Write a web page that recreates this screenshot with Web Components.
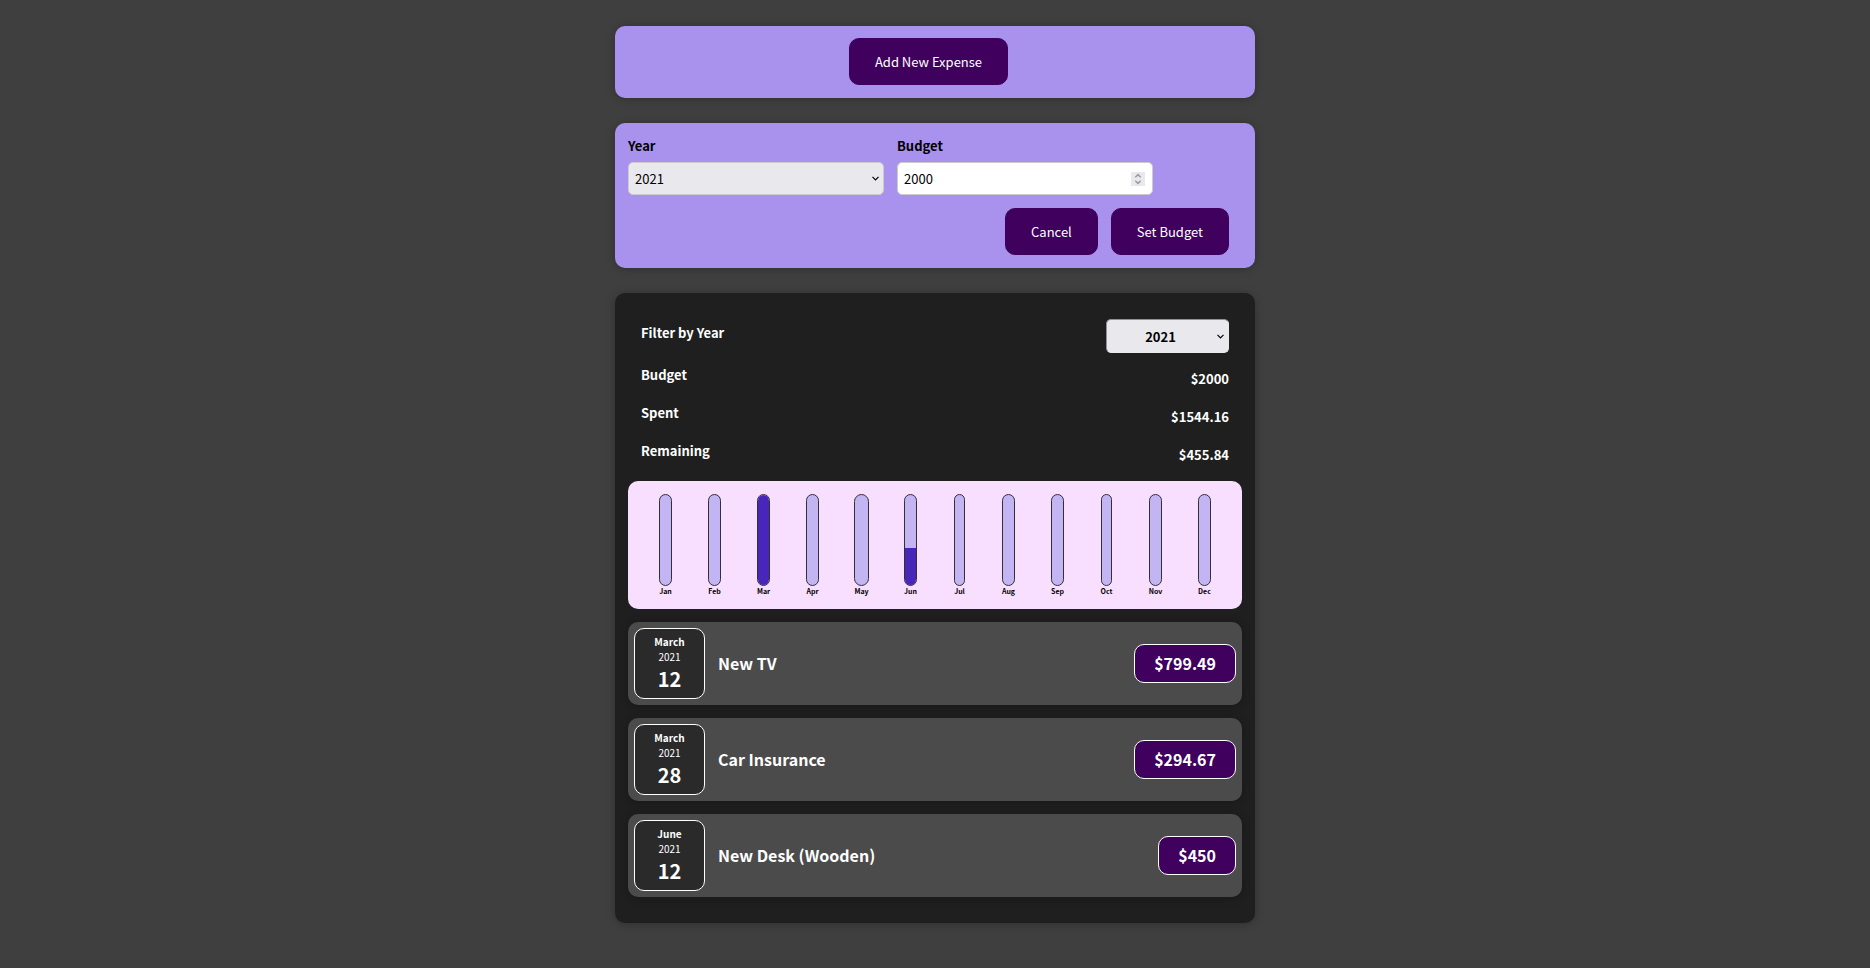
<!DOCTYPE html>
<html lang="en">
<head>
<meta charset="utf-8">
<meta name="viewport" content="width=device-width, initial-scale=1">
<title>Expense Tracker</title>
<style>
  body {
    margin: 0;
    padding: 26px 0;
    background: #3f3f3f;
    color: #fff;
    font: 13px/19px "Noto Sans CJK JP", "Noto Sans", sans-serif;
  }
</style>
</head>
<body>
<expense-app></expense-app>
<script>
const define = (name, html, setup) => {
  const template = document.createElement('template');
  template.innerHTML = html;
  customElements.define(name, class extends HTMLElement {
    connectedCallback() {
      if (this.shadowRoot) return;
      const root = this.attachShadow({ mode: 'open' });
      root.append(template.content.cloneNode(true));
      if (setup) setup(this, root);
    }
  });
};

define('ui-card', `
  <style>
    :host { display: block; border-radius: 10px; box-shadow: 0 1px 8px rgba(0,0,0,.25); background: var(--card-bg, #1f1f1f); }
  </style>
  <slot></slot>`);

define('ui-button', `
  <style>
    :host { display: block; }
    button { display: block; margin: 0; padding: 13px 25px; border: 1px solid #40005d; border-radius: 10px;
      background: #40005d; color: #fff; font: inherit; line-height: 19px; cursor: pointer; }
    button:hover { background: #510674; }
  </style>
  <button type="button"><slot></slot></button>`);

define('year-select', `
  <style>
    :host { display: grid; align-items: center; }
    select, svg { grid-area: 1 / 1; }
    select { appearance: none; box-sizing: border-box; width: 100%; height: 33px; margin: 0; padding: 0 6px;
      border: 1px solid #ccc; border-radius: 5px; background: #e9e9ed; color: #000; font: inherit; }
    svg { justify-self: end; margin-right: 5px; pointer-events: none; }
    :host([strong]) select { height: 34px; padding-right: 20px; border-color: #8f8f9d #e9e9ed #e9e9ed #8f8f9d;
      font-weight: bold; text-align: center; text-align-last: center; }
  </style>
  <select><option>2022</option><option selected>2021</option><option>2020</option><option>2019</option></select>
  <svg width="7" height="5" viewBox="0 0 7 5" fill="none" stroke="#000" stroke-width="1.2"><path d="M.5 .8 3.5 3.8 6.5 .8"/></svg>`,
  (host, root) => root.querySelector('select').setAttribute('aria-label', host.getAttribute('label')));

define('number-field', `
  <style>
    :host { display: grid; align-items: center; }
    input, svg { grid-area: 1 / 1; }
    input { appearance: textfield; box-sizing: border-box; width: 100%; height: 33px; margin: 0; padding: 0 28px 0 6px;
      border: 1px solid #ccc; border-radius: 5px; background: #fff; color: #000; font: inherit; }
    input::-webkit-inner-spin-button { appearance: none; margin: 0; }
    svg { justify-self: end; margin-right: 8px; pointer-events: none; }
  </style>
  <input type="number" value="2000" min="0">
  <svg width="14" height="14" viewBox="0 0 14 14" fill="none" stroke="#9a9aa2" stroke-width="1.5"><path fill="#e9e9ed" stroke="none" d="M0 0h14v14H0z"/><path d="M4.300 5.200 7 2.600 9.700 5.200M4.300 8.800 7 11.400 9.700 8.800"/></svg>`,
  (host, root) => root.querySelector('input').setAttribute('aria-label', host.getAttribute('label')));

define('form-field', `
  <style>
    :host { display: block; flex: 0 1 256px; min-width: 0; color: #000; }
    label { display: block; font-weight: bold; margin-bottom: 7px; }
  </style>
  <label><slot name="label"></slot></label><slot></slot>`);

define('budget-form', `
  <style>
    :host { display: block; padding: 13px; }
    .fields { display: flex; gap: 13px; }
    .actions { display: flex; justify-content: flex-end; gap: 13px; margin: 13px 13px 0 0; }
  </style>
  <form>
    <div class="fields">
      <form-field><span slot="label">Year</span><year-select label="Year"></year-select></form-field>
      <form-field><span slot="label">Budget</span><number-field label="Budget"></number-field></form-field>
    </div>
    <div class="actions"><ui-button>Cancel</ui-button><ui-button>Set Budget</ui-button></div>
  </form>`);

define('summary-row', `
  <style>
    :host { display: flex; justify-content: space-between; align-items: flex-start; height: 26px; margin-bottom: 12px; font-weight: bold; }
    .value { padding-top: 4px; }
  </style>
  <span><slot name="label"></slot></span><span class="value"><slot></slot></span>`);

define('chart-bar', `
  <style>
    :host { display: flex; flex-direction: column; align-items: stretch; color: #000; text-align: center; }
    .track { display: flex; flex-direction: column; justify-content: flex-end; height: 90px; overflow: hidden;
      border: 1px solid #313131; border-radius: 12px; background: #c3b4f3; }
    .fill { height: var(--fill, 0%); background: #4826b9; }
    .label { font-size: 7px; font-weight: bold; line-height: 10px; }
  </style>
  <div class="track"><div class="fill"></div></div>
  <span class="label"><slot></slot></span>`,
  (host) => host.style.setProperty('--fill', (host.getAttribute('fill') || 0) + '%'));

define('expense-chart', `
  <style>
    :host { display: grid; grid-template-columns: repeat(12, 1fr); justify-items: center; padding: 13px;
      border-radius: 10px; background: #f8dfff; }
  </style>
  <chart-bar>Jan</chart-bar><chart-bar>Feb</chart-bar><chart-bar fill="100">Mar</chart-bar><chart-bar>Apr</chart-bar>
  <chart-bar>May</chart-bar><chart-bar fill="41">Jun</chart-bar><chart-bar>Jul</chart-bar><chart-bar>Aug</chart-bar>
  <chart-bar>Sep</chart-bar><chart-bar>Oct</chart-bar><chart-bar>Nov</chart-bar><chart-bar>Dec</chart-bar>`);

define('expense-date', `
  <style>
    :host { display: flex; flex-direction: column; justify-content: center; align-items: center; box-sizing: border-box;
      width: 71px; height: 71px; border: 1px solid #fff; border-radius: 10px; background: #2a2a2a; }
    .month { font-size: 10px; font-weight: bold; line-height: 15px; }
    .year { font-size: 10px; line-height: 15px; }
    .day { font-size: 20px; font-weight: bold; line-height: 29px; }
  </style>
  <span class="month"></span><span class="year"></span><span class="day"></span>`,
  (host, root) => ['month', 'year', 'day'].forEach(k => root.querySelector('.' + k).textContent = host.getAttribute(k)));

define('expense-item', `
  <style>
    :host { display: flex; align-items: center; gap: 13px; padding: 6px; border-radius: 10px; background: #4b4b4b;
      box-shadow: 0 1px 8px rgba(0,0,0,.25); }
    h2 { flex: 1; margin: 0; font-size: 16px; line-height: 25px; }
    .price { padding: 6px 19px; border: 1px solid #fff; border-radius: 10px; background: #40005d;
      font-size: 16px; font-weight: bold; line-height: 25px; }
  </style>
  <slot name="date"></slot>
  <h2><slot></slot></h2>
  <div class="price"><slot name="price"></slot></div>`);

define('expense-app', `
  <style>
    :host { display: flex; flex-direction: column; gap: 25px; width: 95%; max-width: 640px; margin: 0 auto; }
    .purple { --card-bg: #a892ee; }
    .add { display: flex; justify-content: center; padding: 12px 26px 13px 13px; }
    .panel { padding: 26px 13px; }
    .summary { padding: 0 13px 2px; }
    .filter { display: flex; justify-content: space-between; align-items: flex-start; height: 46px; font-weight: bold; }
    .filter span { padding-top: 4px; }
    .filter year-select { width: 123px; }
    .list { display: grid; gap: 13px; margin-top: 13px; }
  </style>
  <ui-card class="purple"><div class="add"><ui-button>Add New Expense</ui-button></div></ui-card>
  <ui-card class="purple"><budget-form></budget-form></ui-card>
  <ui-card>
    <div class="panel">
      <div class="summary">
        <div class="filter"><span>Filter by Year</span><year-select strong label="Filter by Year"></year-select></div>
        <summary-row><span slot="label">Budget</span>$2000</summary-row>
        <summary-row><span slot="label">Spent</span>$1544.16</summary-row>
        <summary-row><span slot="label">Remaining</span>$455.84</summary-row>
      </div>
      <expense-chart></expense-chart>
      <div class="list">
        <expense-item><expense-date slot="date" month="March" year="2021" day="12"></expense-date>New TV<span slot="price">$799.49</span></expense-item>
        <expense-item><expense-date slot="date" month="March" year="2021" day="28"></expense-date>Car Insurance<span slot="price">$294.67</span></expense-item>
        <expense-item><expense-date slot="date" month="June" year="2021" day="12"></expense-date>New Desk (Wooden)<span slot="price">$450</span></expense-item>
      </div>
    </div>
  </ui-card>`);
</script>
</body>
</html>
